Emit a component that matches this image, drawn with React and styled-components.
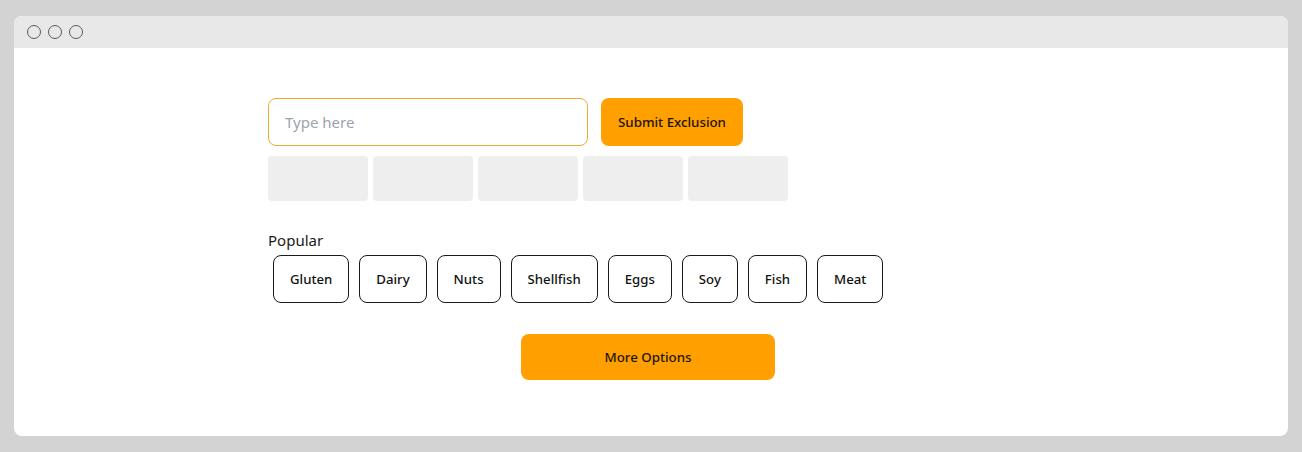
import React from "react";
import styled, { createGlobalStyle } from "styled-components";

const Global = createGlobalStyle`
  html, body { margin: 0; padding: 0; background: #d3d3d3; }
  body { font-family: "Noto Sans", "Open Sans", sans-serif; }
  * { box-sizing: border-box; }
`;

const Page = styled.div`
  padding: 16px 14px 16px 14px;
  height: 452px;
`;

const Window = styled.div`
  background: #ffffff;
  border-radius: 8px;
  overflow: hidden;
  height: 420px;
  display: flex;
  flex-direction: column;
`;

const TitleBar = styled.div`
  height: 32px;
  background: #e8e8e8;
  display: flex;
  align-items: center;
  gap: 7px;
  padding-left: 13px;
`;

const Dot = styled.span`
  width: 14px;
  height: 14px;
  border-radius: 50%;
  border: 1.3px solid #5a5a5a;
`;

const Content = styled.div`
  padding: 50px 0 0 254px;
`;

const Column = styled.div`
  width: 760px;
  display: flex;
  flex-direction: column;
`;

const InputRow = styled.div`
  display: flex;
  gap: 13px;
`;

const Input = styled.input`
  width: 320px;
  height: 48px;
  border: 1px solid #eeaa35;
  border-radius: 8px;
  padding: 0 16px;
  font-family: inherit;
  font-size: 15px;
  outline: none;
  &::placeholder { color: #9ca3af; }
`;

const PrimaryButton = styled.button`
  height: ${p => p.$h}px;
  width: ${p => (p.$w ? `${p.$w}px` : "auto")};
  padding: 0 17px;
  background: #ff9f00;
  border: none;
  border-radius: 8px;
  font-family: inherit;
  font-size: 13.3px;
  font-weight: 500;
  color: #1c1408;
`;

const SkeletonRow = styled.div`
  display: flex;
  gap: 5px;
  margin-top: 10px;
`;

const Skeleton = styled.div`
  width: 100px;
  height: 45px;
  border-radius: 4px;
  background: #eeeeee;
`;

const Label = styled.div`
  margin-top: 28px;
  font-size: 15px;
  color: #1a1a1a;
  line-height: 22px;
`;

const Chips = styled.div`
  display: flex;
  margin-top: 4px;
`;

const Chip = styled.button`
  margin: 0 5px;
  height: 48px;
  padding: 0 16px;
  background: #fff;
  border: 1px solid #1a1a1a;
  border-radius: 8px;
  font-family: inherit;
  font-size: 13.2px;
  font-weight: 500;
  color: #111;
`;

const Bottom = styled.div`
  margin-top: 31px;
  display: flex;
  justify-content: center;
`;

const items = ["Gluten", "Dairy", "Nuts", "Shellfish", "Eggs", "Soy", "Fish", "Meat"];

export default function App() {
  return (
    <Page>
      <Global />
      <Window>
        <TitleBar>
          <Dot />
          <Dot />
          <Dot />
        </TitleBar>
        <Content>
          <Column>
            <InputRow>
              <Input placeholder="Type here" />
              <PrimaryButton $h={48}>Submit Exclusion</PrimaryButton>
            </InputRow>
            <SkeletonRow>
              {[0, 1, 2, 3, 4].map(i => <Skeleton key={i} />)}
            </SkeletonRow>
            <Label>Popular</Label>
            <Chips>
              {items.map(t => <Chip key={t}>{t}</Chip>)}
            </Chips>
            <Bottom>
              <PrimaryButton $h={46} $w={254}>More Options</PrimaryButton>
            </Bottom>
          </Column>
        </Content>
      </Window>
    </Page>
  );
}
